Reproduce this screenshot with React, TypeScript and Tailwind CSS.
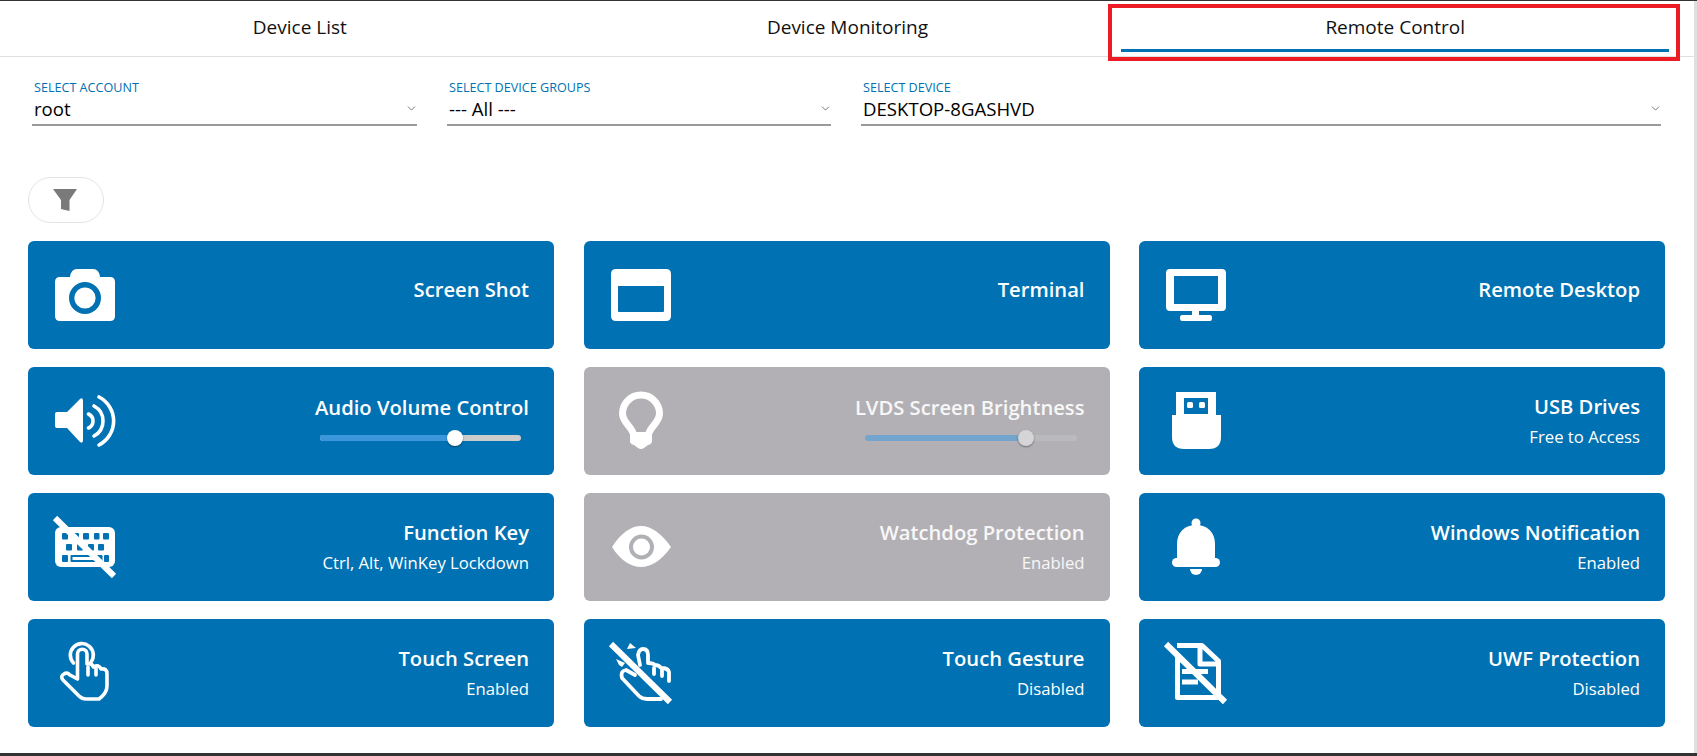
import type { ReactNode } from "react"
import { ChevronDown } from "lucide-react"

const BLUE = "#0071b2"
const GRAY = "#b2b0b4"

function Icon({ children }: { children: ReactNode }) {
    return (
        <svg viewBox="0 0 60 60" className="w-[60px] h-[60px] shrink-0 overflow-visible">
            {children}
        </svg>
    )
}

function Slash() {
    return (
        <>
            <path d="M2 4 L60 62" stroke={BLUE} strokeWidth="1.5" fill="none" />
            <path d="M0 1 L59 59" stroke="#fff" strokeWidth="6" fill="none" />
        </>
    )
}

const CameraIcon = () => (
    <Icon>
        <path d="M5 12 H15 Q16 4 22 4 H38 Q44 4 45 12 H55 Q60 12 60 17 V51 Q60 56 55 56 H5 Q0 56 0 51 V17 Q0 12 5 12 Z" fill="#fff" />
        <circle cx="30" cy="33" r="13.3" fill="#fff" stroke={BLUE} strokeWidth="5.4" />
    </Icon>
)

const TerminalIcon = () => (
    <Icon>
        <path fillRule="evenodd" d="M5 4 H55 Q60 4 60 9 V51 Q60 56 55 56 H5 Q0 56 0 51 V9 Q0 4 5 4 Z M7 21 V46 Q7 47 8 47 H52 Q53 47 53 46 V21 Z" fill="#fff" />
    </Icon>
)

const MonitorIcon = () => (
    <Icon>
        <path fillRule="evenodd" d="M4 4 H56 Q60 4 60 8 V42 Q60 46 56 46 H33 V50 H44 Q46 50 46 53 Q46 56 44 56 H16 Q14 56 14 53 Q14 50 16 50 H26 V46 H4 Q0 46 0 42 V8 Q0 4 4 4 Z M8 11 V39 H52 V11 Z" fill="#fff" />
    </Icon>
)

const VolumeIcon = () => (
    <Icon>
        <path d="M2 21 H12 L25 8 Q28 6 28 10 V49 Q28 53 25 51 L12 37 H2 Q0 37 0 35 V23 Q0 21 2 21 Z" fill="#fff" />
        <g fill="none" stroke="#fff" strokeWidth="3.6" strokeLinecap="round">
            <path d="M33.5 23 A7.7 7.7 0 0 1 33.5 37" />
            <path d="M39 15 A17 17 0 0 1 39 45" />
            <path d="M44 6 A27 27 0 0 1 44 54" />
        </g>
    </Icon>
)

const BulbIcon = () => (
    <Icon>
        <path d="M22 42 C20 35 11.5 31 11.5 22.5 A18.5 18.5 0 0 1 48.5 22.5 C48.5 31 40 35 38 42" fill="none" stroke="#fff" strokeWidth="7" />
        <path d="M19 41 H41 V50 Q41 53 37 54 L33 57 Q30 59 27 57 L23 54 Q19 53 19 50 Z" fill="#fff" />
    </Icon>
)

const UsbIcon = () => (
    <Icon>
        <path fillRule="evenodd" d="M10 1 H50 V24 H55 V46 Q55 58 43 58 H18 Q6 58 6 46 V24 H10 Z M18 7 V23 H42 V7 Z" fill="#fff" />
        <rect x="21" y="11" width="6" height="6" rx="1.5" fill="#fff" />
        <rect x="33" y="11" width="6" height="6" rx="1.5" fill="#fff" />
    </Icon>
)

const KeyboardIcon = () => (
    <Icon>
        <rect x="0" y="10" width="60" height="40" rx="6" fill="#fff" />
        <g fill={BLUE}>
            <rect x="7" y="16" width="6" height="6.5" rx="1" />
            <rect x="18" y="16" width="6" height="6.5" rx="1" />
            <rect x="28" y="16" width="6" height="6.5" rx="1" />
            <rect x="39" y="16" width="5.5" height="6.5" rx="1" />
            <rect x="48" y="16" width="6" height="6.5" rx="1" />
            <rect x="11" y="27" width="6" height="6.5" rx="1" />
            <rect x="22" y="27" width="6" height="6.5" rx="1" />
            <rect x="33" y="27" width="6" height="6.5" rx="1" />
            <rect x="43" y="27" width="6" height="6.5" rx="1" />
            <rect x="7" y="38" width="6" height="7" rx="1" />
            <rect x="15.5" y="38" width="32" height="7" rx="1" />
            <rect x="49" y="38" width="5" height="7" rx="1" />
        </g>
        <rect x="17.5" y="40" width="22" height="3" fill="#fff" />
        <Slash />
    </Icon>
)

const EyeIcon = () => (
    <Icon>
        <path d="M1 30 C10 16 20 9 30 9 C40 9 50 16 60 30 C50 44 40 50 30 50 C20 50 10 44 1 30 Z" fill="#fff" />
        <circle cx="30.5" cy="30" r="10.5" fill="#fff" stroke={GRAY} strokeWidth="4" />
    </Icon>
)

const BellIcon = () => (
    <Icon>
        <circle cx="30" cy="6" r="4.5" fill="#fff" />
        <path d="M11 44 V27 C11 15 19 8 30 8 C41 8 49 15 49 27 V44 Z" fill="#fff" />
        <rect x="6" y="41" width="48" height="9" rx="4.5" fill="#fff" />
        <path d="M24 52 H36 A6 6 0 0 1 24 52 Z" fill="#fff" />
    </Icon>
)

const TouchIcon = () => (
    <Icon>
        <g fill="none" stroke="#fff" strokeWidth="3.6" strokeLinejoin="round" strokeLinecap="round">
            <path d="M18.5 20 A11.5 11.5 0 1 1 36 19" />
            <path d="M22.5 36 V11 A4.7 4.7 0 0 1 32 11 V21 Q37 20 38.5 24 Q44 21 46 26 Q52 25 52 31 V43 Q52 50 44 56 H31 Q27 56 24 53 L8 37 Q5 33 9 31 Q12 29 15 32 Z" />
            <path d="M33 24 V32 M41 25 V32" />
        </g>
    </Icon>
)

const GestureIcon = () => (
    <Icon>
        <path d="M16 6 L19 0 L25 5 Z" fill="#fff" />
        <path d="M5 16 L14 20 L11 24 L8 22 Z" fill="#fff" />
        <g fill="none" stroke="#fff" strokeWidth="3.8" strokeLinejoin="round" strokeLinecap="round">
            <path d="M29 22 L27 12 Q28 6 32 6 Q37 6 37 12 V20 Q42 20 44 22 Q48 22 50 25 Q57 25 58 29 V38" />
            <path d="M43 25 V31 M51 26 V33" />
            <path d="M24 32 L15 27 Q9 28 11 35 L28 53 Q31 56 36 56 H50" />
        </g>
        <Slash />
    </Icon>
)

const DocIcon = () => (
    <Icon>
        <g fill="none" stroke="#fff" strokeWidth="5" strokeLinejoin="round">
            <path d="M11 2.5 H36 L52.5 18 V54.5 H11.5 V12" />
            <path d="M34 2 V21 H53" />
        </g>
        <path d="M16 28.5 H42 M16 39 H32" stroke="#fff" strokeWidth="5" fill="none" />
        <path d="M2 4 L60 62" stroke={BLUE} strokeWidth="3" fill="none" />
        <path d="M0 1 L59 59" stroke="#fff" strokeWidth="6" fill="none" />
    </Icon>
)

function Slider({ percent, width, disabled }: { percent: number; width: string; disabled?: boolean }) {
    return (
        <div className={`relative h-[6px] mt-[14px] mb-[7px] mr-[8px] rounded-full ${width} ${disabled ? "bg-[#bababc]" : "bg-[#cccccc]"}`}>
            <div
                className={`h-full rounded-full ${disabled ? "bg-[#72a4cd]" : "bg-[#3b96dc]"}`}
                style={{ width: `${percent}%` }}
            />
            <div
                className={`absolute top-[-5px] w-[16px] h-[16px] -ml-[8px] rounded-full shadow-[0_1px_2px_rgba(0,0,0,0.4)] ${disabled ? "bg-[#d5d5d8]" : "bg-white"}`}
                style={{ left: `${percent}%` }}
            />
        </div>
    )
}

type CardProps = {
    icon: ReactNode
    title: string
    sub?: string
    disabled?: boolean
    slider?: ReactNode
}

function Card({ icon, title, sub, disabled, slider }: CardProps) {
    const oneLine = !sub && !slider
    return (
        <div className={`h-[108px] rounded-[6px] flex items-center justify-between pl-[27px] pr-[25px] text-white ${disabled ? "bg-[#b2b0b4]" : "bg-[#0071b2]"}`}>
            {icon}
            <div className={`flex flex-col items-end ${oneLine ? "pb-[12px]" : "pb-[2px]"}`}>
                <div className={`text-[20.2px] leading-[28px] font-semibold ${disabled ? "text-white/90" : ""}`}>{title}</div>
                {sub && <div className={`text-[16.7px] font-medium leading-[22px] mt-[6px] ${disabled ? "text-white/90" : ""}`}>{sub}</div>}
                {slider}
            </div>
        </div>
    )
}

function Select({ label, value, className }: { label: string; value: string; className: string }) {
    return (
        <div className={`${className} h-[46px] border-b-2 border-[#9a9a9a] relative`}>
            <div className="pl-[2px] text-[12.6px] leading-[14px] text-[#0071b2] mt-[1px]">{label}</div>
            <div className="pl-[2px] text-[18.6px] leading-[26px] text-black mt-[1px]">{value}</div>
            <ChevronDown className="absolute right-[-1px] top-[22px] w-[13px] h-[13px] text-[#666666]" strokeWidth={1.6} />
        </div>
    )
}

const tabs = ["Device List", "Device Monitoring", "Remote Control"]

export default function App() {
    return (
        <div className="relative h-screen flex flex-col overflow-hidden bg-white font-['Open_Sans',sans-serif] border-t border-[#333333]">
            <div className="flex-1 flex min-h-0">
                <div className="flex-1 min-w-0">
                    <div className="h-[56px] border-b border-[#e0e0e0] flex pl-[26px] pr-[25px]">
                        {tabs.map((tab, i) => (
                            <div
                                key={tab}
                                className={`flex-1 h-[51px] flex items-center justify-center text-[19px] text-[#111111] pt-[5px] border-b-[3px] ${i === 2 ? "border-[#0071b2]" : "border-transparent"}`}
                            >
                                {tab}
                            </div>
                        ))}
                    </div>

                    <div className="flex gap-[30px] pl-[32px] pr-[33px] pt-[23px]">
                        <Select label="SELECT ACCOUNT" value="root" className="w-[385px]" />
                        <Select label="SELECT DEVICE GROUPS" value="--- All ---" className="w-[384px]" />
                        <Select label="SELECT DEVICE" value="DESKTOP-8GASHVD" className="flex-1" />
                    </div>

                    <div className="pl-[28px] pr-[29px] pt-[51px]">
                        <button className="w-[76px] h-[46px] rounded-[23px] border border-[#e4e4e4] flex items-center justify-center">
                            <svg viewBox="0 0 24 24" className="w-[24px] h-[24px] -ml-[3px]" fill="#7a7a7a">
                                <path d="M0 1 H24 L16.5 12 V23 L8 21 V12 Z" />
                            </svg>
                        </button>

                        <div className="grid grid-cols-3 gap-x-[29.5px] gap-y-[18px] mt-[18px]">
                            <Card icon={<CameraIcon />} title="Screen Shot" />
                            <Card icon={<TerminalIcon />} title="Terminal" />
                            <Card icon={<MonitorIcon />} title="Remote Desktop" />
                            <Card icon={<VolumeIcon />} title="Audio Volume Control" slider={<Slider percent={67} width="w-[201px]" />} />
                            <Card icon={<BulbIcon />} title="LVDS Screen Brightness" disabled slider={<Slider percent={76} width="w-[212px]" disabled />} />
                            <Card icon={<UsbIcon />} title="USB Drives" sub="Free to Access" />
                            <Card icon={<KeyboardIcon />} title="Function Key" sub="Ctrl, Alt, WinKey Lockdown" />
                            <Card icon={<EyeIcon />} title="Watchdog Protection" sub="Enabled" disabled />
                            <Card icon={<BellIcon />} title="Windows Notification" sub="Enabled" />
                            <Card icon={<TouchIcon />} title="Touch Screen" sub="Enabled" />
                            <Card icon={<GestureIcon />} title="Touch Gesture" sub="Disabled" />
                            <Card icon={<DocIcon />} title="UWF Protection" sub="Disabled" />
                        </div>
                    </div>
                </div>
                <div className="w-[3px] bg-[#e0e0e0]" />
            </div>
            <div className="h-[3px] bg-[#333333]" />
            {/* annotation box around the active tab */}
            <div className="absolute left-[1108px] top-[3px] w-[572px] h-[57px] border-4 border-[#ed1c24]" />
        </div>
    )
}
